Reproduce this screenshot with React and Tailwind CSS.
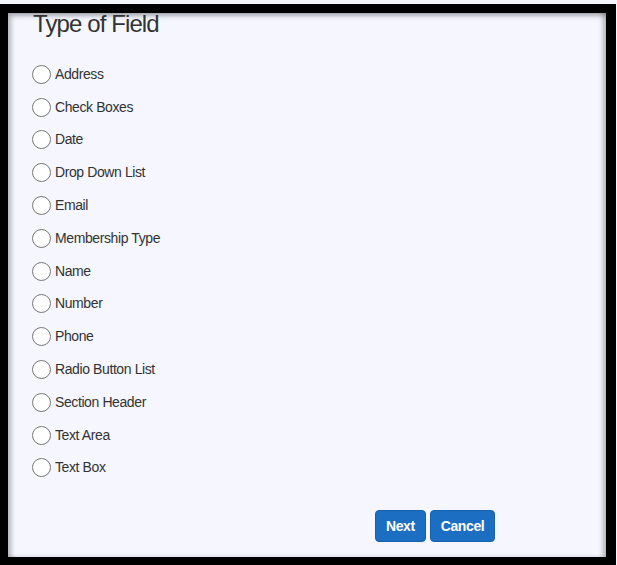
import React, { useState } from 'react';

const fieldTypes = [
  'Address',
  'Check Boxes',
  'Date',
  'Drop Down List',
  'Email',
  'Membership Type',
  'Name',
  'Number',
  'Phone',
  'Radio Button List',
  'Section Header',
  'Text Area',
  'Text Box',
];

const App = () => {
  const [selected, setSelected] = useState(null);

  return (
    <div className="h-[565px] overflow-hidden bg-[#f5f6fd] pt-[4px] font-['Liberation_Sans',Arial,sans-serif] text-[#333]">
      <div className="box-border h-[561px] w-[616px] overflow-hidden border-black border-l-8 border-t-[9px] border-r-[10px] border-b-8 bg-[#f5f6fe] shadow-[inset_4px_4px_5px_-1px_rgba(0,0,0,0.28),inset_-4px_0_5px_-1px_rgba(0,0,0,0.28)]">
        <div className="px-[25px]">
          <h2 className="mt-[-1px] text-[24px] leading-none font-normal tracking-[-0.9px]">Type of Field</h2>

          <div className="ml-[-1px] mt-[22px] flex flex-col">
            {fieldTypes.map((t) => (
              <label
                key={t}
                className="flex h-[32.8px] cursor-pointer items-center gap-[4px] text-[14px] tracking-[-0.4px]"
                onClick={() => setSelected(t)}
              >
                <span className="flex h-[19px] w-[19px] items-center justify-center rounded-full border border-[#767676] bg-white">
                  {selected === t && <span className="h-[9px] w-[9px] rounded-full bg-[#1b6ec2]"></span>}
                </span>
                <span>{t}</span>
              </label>
            ))}
          </div>

          <div className="mt-[26px] flex gap-[4px] pl-[342px]">
            <button className="h-[32px] rounded-[4px] border border-[#1861ac] bg-[#1b6ec2] px-[10px] text-[14px] font-bold tracking-[-0.4px] text-white">
              Next
            </button>
            <button className="h-[32px] rounded-[4px] border border-[#1861ac] bg-[#1b6ec2] px-[10px] text-[14px] font-bold tracking-[-0.4px] text-white">
              Cancel
            </button>
          </div>
        </div>
      </div>
    </div>
  );
};

export default App;
